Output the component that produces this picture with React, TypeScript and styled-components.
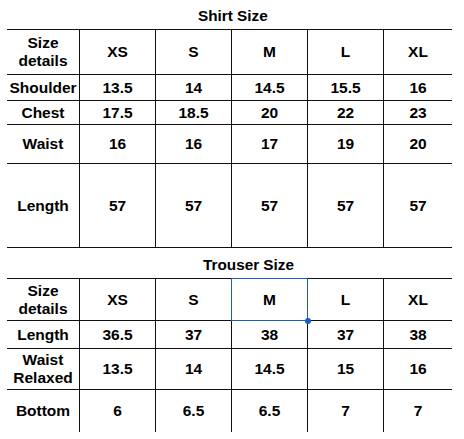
import React from "react";
import styled, { createGlobalStyle } from "styled-components";

type Row = { label: string; values: string[]; height: number };

const sizes = ["XS", "S", "M", "L", "XL"];

const shirtRows: Row[] = [
  { label: "Shoulder", values: ["13.5", "14", "14.5", "15.5", "16"], height: 26 },
  { label: "Chest", values: ["17.5", "18.5", "20", "22", "23"], height: 24 },
  { label: "Waist", values: ["16", "16", "17", "19", "20"], height: 39 },
  { label: "Length", values: ["57", "57", "57", "57", "57"], height: 84 },
];

const trouserRows: Row[] = [
  { label: "Length", values: ["36.5", "37", "38", "37", "38"], height: 28 },
  { label: "Waist\nRelaxed", values: ["13.5", "14", "14.5", "15", "16"], height: 41 },
  { label: "Bottom", values: ["6", "6.5", "6.5", "7", "7"], height: 43 },
];

const SizeTable: React.FC<{
  title: string;
  titleOffset: number;
  titleHeight: number;
  headerHeight: number;
  rows: Row[];
  closed?: boolean;
  selected?: number;
}> = ({ title, titleOffset, titleHeight, headerHeight, rows, closed, selected }) => {
  const rowHeights = [headerHeight, ...rows.map((r) => r.height)]
    .map((h) => `${h}px`)
    .join(" ");
  return (
    <Section>
      <Title $offset={titleOffset} $height={titleHeight}>
        {title}
      </Title>
      <Grid $closed={closed} style={{ gridTemplateRows: rowHeights }}>
        <Cell>{"Size\ndetails"}</Cell>
        {sizes.map((s, i) => (
          <Cell key={s} $last={i === sizes.length - 1} $selected={selected === i}>
            {s}
          </Cell>
        ))}
        {rows.map((r) => (
          <React.Fragment key={r.label}>
            <Cell>{r.label}</Cell>
            {r.values.map((v, i) => (
              <Cell key={i} $last={i === r.values.length - 1}>
                {v}
              </Cell>
            ))}
          </React.Fragment>
        ))}
      </Grid>
    </Section>
  );
};

const App: React.FC = () => {
  return (
    <>
      <GlobalStyle />
      <Page>
        <SizeTable
          title="Shirt Size"
          titleOffset={191}
          titleHeight={29}
          headerHeight={45}
          rows={shirtRows}
          closed
        />
        <SizeTable
          title="Trouser Size"
          titleOffset={196}
          titleHeight={30}
          headerHeight={42}
          rows={trouserRows}
          selected={2}
        />
      </Page>
    </>
  );
};

export default App;

const GlobalStyle = createGlobalStyle`
  html, body {
    margin: 0;
    padding: 0;
    background: #fff;
  }
  body {
    font-family: "Liberation Sans", Arial, sans-serif;
    color: #000;
  }
`;

const Page = styled.main`
  width: 464px;
  height: 439px;
  overflow: hidden;
  padding-left: 7px;
  box-sizing: border-box;
  display: flex;
  flex-direction: column;
`;

const Section = styled.section`
  display: flex;
  flex-direction: column;
`;

const Title = styled.div<{ $offset: number; $height: number }>`
  height: ${(p) => p.$height}px;
  padding-left: ${(p) => p.$offset}px;
  box-sizing: border-box;
  display: flex;
  align-items: flex-end;
  padding-bottom: 4px;
  font-size: 15.3px;
  font-weight: bold;
  line-height: 1.15;
`;

const Grid = styled.div<{ $closed?: boolean }>`
  display: grid;
  grid-template-columns: 73px 76px 76px 76px 76px 68px;
  width: 445px;
  border-bottom: ${(p) => (p.$closed ? "1px solid #111" : "none")};
`;

const Cell = styled.div<{ $last?: boolean; $selected?: boolean }>`
  position: relative;
  z-index: ${(p) => (p.$selected ? 1 : 0)};
  box-sizing: border-box;
  border-top: 1px solid #111;
  border-right: ${(p) => (p.$last ? "none" : "1px solid #111")};
  display: flex;
  align-items: center;
  justify-content: center;
  text-align: center;
  white-space: pre-line;
  font-size: 15.5px;
  font-weight: bold;
  line-height: 1.15;

  ${(p) =>
    p.$selected &&
    `
    &::before {
      content: "";
      position: absolute;
      top: -1px;
      left: -1px;
      right: -1px;
      bottom: -1px;
      border: 1px solid #1d5cc4;
      pointer-events: none;
    }
    &::after {
      content: "";
      position: absolute;
      right: -4px;
      bottom: -4px;
      width: 6px;
      height: 6px;
      border-radius: 50%;
      background: #1a5bd0;
    }
  `}
`;
